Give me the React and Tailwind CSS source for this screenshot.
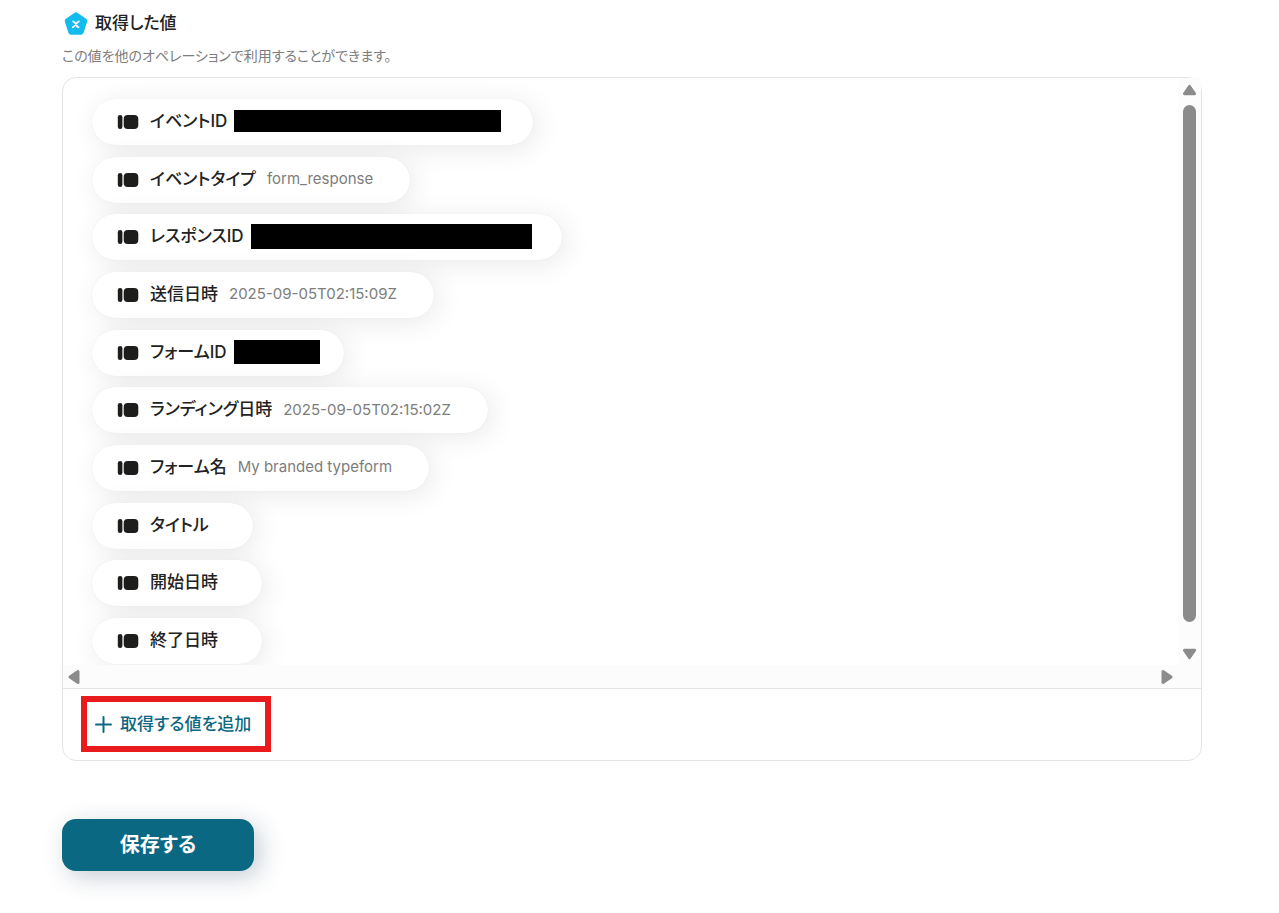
const items = [
  { label: 'イベントID', redacted: 'h-[22px] w-[267px]', pad: 'pr-8' },
  { label: 'イベントタイプ', value: 'form_response' },
  { label: 'レスポンスID', redacted: 'h-[25px] w-[281px]', pad: 'pr-[30px]' },
  { label: '送信日時', value: '2025-09-05T02:15:09Z' },
  { label: 'フォームID', redacted: 'h-6 w-[86px]', pad: 'pr-6' },
  { label: 'ランディング日時', value: '2025-09-05T02:15:02Z' },
  { label: 'フォーム名', value: 'My branded typeform' },
  { label: 'タイトル' },
  { label: '開始日時' },
  { label: '終了日時' },
];

function VariableLogo() {
  return (
    <svg className="h-[26px] w-6" viewBox="0 0 24 26" aria-hidden="true">
      <path
        d="M10.3 2.9a3 3 0 0 1 3.4 0l8.4 5.9a2.6 2.6 0 0 1 1 3l-3.5 11a2.8 2.8 0 0 1-2.7 2H7.1a2.8 2.8 0 0 1-2.7-2L0.9 11.800a2.600 2.600 0 0 1 1-3z"
        fill="#12bbee"
      />
      <path
        d="M8.500 11.300c1.300 0 1.700.3 2.300 1.300l2.200 3.700c.5.900 1 1.100 2.300 1.100M15.500 11.300c-1 0-1.600.3-2.300 1.200l-3 3.800c-.6.800-1.100 1.100-2.100 1.100"
        fill="none"
        stroke="white"
        strokeWidth="1.800"
        strokeLinecap="butt"
      />
    </svg>
  );
}

function FieldIcon() {
  return (
    <svg className="h-4 w-[22px] shrink-0" viewBox="0 0 22 16" fill="#1d1d1b" aria-hidden="true">
      <rect x="0.8" y="1" width="4.6" height="14" rx="2.2" />
      <rect x="6.7" y="1" width="14.6" height="14" rx="4" />
    </svg>
  );
}

function Arrow({ className }) {
  return (
    <svg className={className} viewBox="0 0 16 12" aria-hidden="true">
      <path d="M8 2 13.5 10H2.5z" fill="#8b8b8b" stroke="#8b8b8b" strokeWidth="3" strokeLinejoin="round" />
    </svg>
  );
}

function Pill({ item }) {
  return (
    <li
      className={`flex h-[46px] items-center rounded-full bg-white pl-[25px] shadow-[4px_4px_28px_rgba(0,0,0,0.09),0_0_1px_rgba(0,0,0,0.1)] ${item.pad || 'pr-[37px]'}`}
    >
      <FieldIcon />
      <span className="ml-[11px] pb-0.5 text-[17px] leading-6 font-medium whitespace-nowrap text-[#222]">{item.label}</span>
      {item.value && (
        <span className="ml-[11px] pb-px text-[15px] leading-6 whitespace-nowrap text-[#7d7d7d]">{item.value}</span>
      )}
      {item.redacted && <span className={`mb-0.5 ml-[7px] bg-black ${item.redacted}`} />}
      {!item.value && !item.redacted && <span className="w-[7px]" />}
    </li>
  );
}

export default function App() {
  return (
    <main className="min-h-screen bg-white pt-2.5 pr-[77px] pb-10 pl-[62px] font-['Inter','Noto_Sans_CJK_JP',sans-serif] [font-feature-settings:'palt']">
      <header>
        <h1 className="flex items-center gap-[7px] pl-0.5 text-[17px] leading-6 font-medium text-[#222]">
          <VariableLogo />
          取得した値
        </h1>
        <p className="mt-[9px] text-[14px] leading-[22px] text-[#7d7d7d]">この値を他のオペレーションで利用することができます。</p>
      </header>

      <section className="mt-2.5 rounded-[14px] border border-[#e4e4e4]">
        <div className="grid h-[610px] grid-cols-[1fr_23px] grid-rows-[1fr_23px]">
          <ul className="flex flex-col items-start justify-between overflow-hidden rounded-tl-[13px] pt-[21px] pb-px pl-[29px]">
            {items.map((item) => (
              <Pill key={item.label} item={item} />
            ))}
          </ul>
          <div className="flex flex-col items-center bg-[#fcfcfc] pt-1.5 pb-[5px]">
            <Arrow className="h-3 w-[15px]" />
            <div className="mt-[9px] h-[517px] w-[13px] rounded-full bg-[#8b8b8b]" />
            <Arrow className="mt-auto h-3 w-[15px] rotate-180" />
          </div>
          <div className="flex items-center justify-between bg-[#fcfcfc] px-[3px]">
            <Arrow className="h-3 w-4 -rotate-90" />
            <Arrow className="h-3 w-4 rotate-90" />
          </div>
          <div className="bg-[#fcfcfc]" />
        </div>
        <div className="border-t border-[#e4e4e4] pt-[7px] pb-2 pl-[18px]">
          <div className="flex h-[56px] w-fit border-[6px] border-[#e91b1d]">
            <button type="button" className="flex items-center gap-2 pr-[14px] pl-2 text-[17px] leading-6 font-medium text-[#0b6883]">
              <svg className="h-[17px] w-[17px]" viewBox="0 0 17 17" aria-hidden="true">
                <path d="M8.5 1v15M1 8.5h15" stroke="currentColor" strokeWidth="2" strokeLinecap="round" />
              </svg>
              取得する値を追加
            </button>
          </div>
        </div>
      </section>

      <button
        type="button"
        className="mt-[58px] h-[52px] w-48 rounded-[14px] bg-[#0b6883] pb-px text-[20px] leading-6 font-bold text-white shadow-[6px_6px_24px_rgba(20,50,80,0.24)]"
      >
        保存する
      </button>
    </main>
  );
}
